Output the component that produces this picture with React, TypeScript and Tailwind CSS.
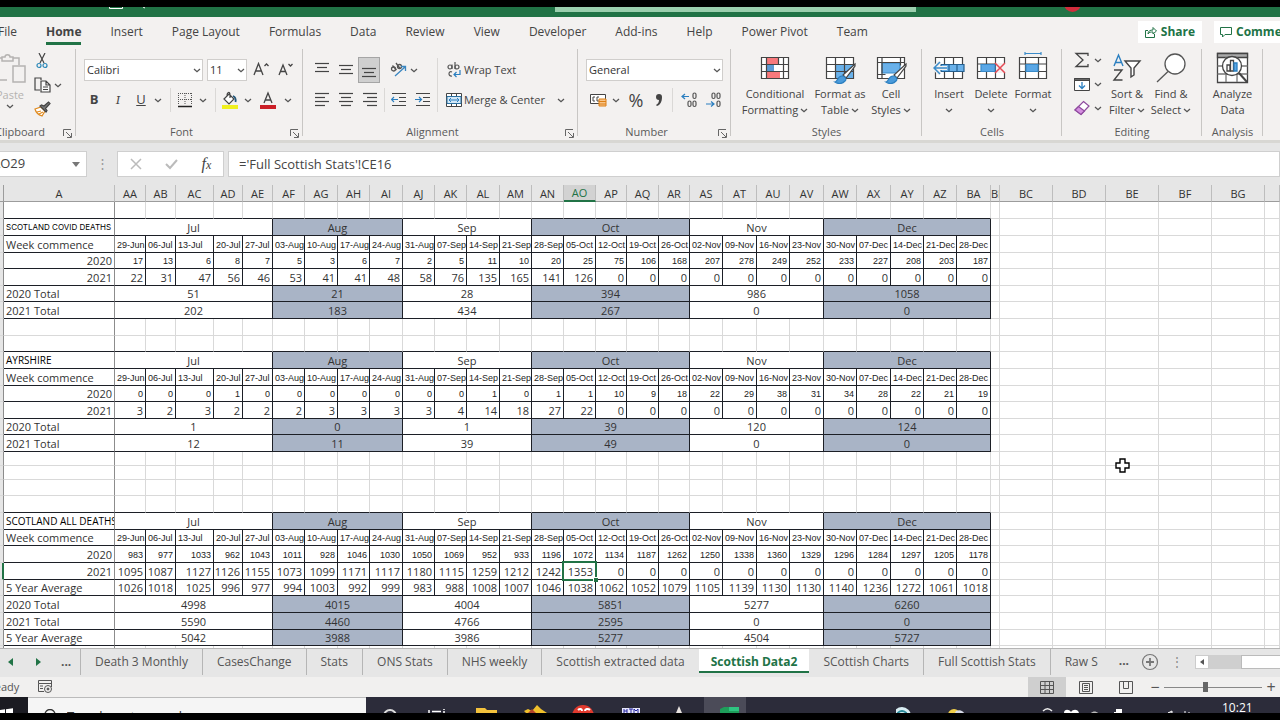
import type { ReactNode } from "react";

const months = [
  { name: "Jul", span: 5, shaded: false },
  { name: "Aug", span: 4, shaded: true },
  { name: "Sep", span: 4, shaded: false },
  { name: "Oct", span: 5, shaded: true },
  { name: "Nov", span: 4, shaded: false },
  { name: "Dec", span: 5, shaded: true },
];

const columns = [
  { name: "A", w: "w-[111px]" },
  { name: "AA", w: "w-[31px]" },
  { name: "AB", w: "w-[30px]" },
  { name: "AC", w: "w-[38px]" },
  { name: "AD", w: "w-[29px]" },
  { name: "AE", w: "w-[30px]" },
  { name: "AF", w: "w-[32px]" },
  { name: "AG", w: "w-[33px]" },
  { name: "AH", w: "w-[32px]" },
  { name: "AI", w: "w-[33px]" },
  { name: "AJ", w: "w-[32px]" },
  { name: "AK", w: "w-[32px]" },
  { name: "AL", w: "w-[33px]" },
  { name: "AM", w: "w-[32px]" },
  { name: "AN", w: "w-[32px]" },
  { name: "AO", w: "w-[32px]" },
  { name: "AP", w: "w-[31px]" },
  { name: "AQ", w: "w-[32px]" },
  { name: "AR", w: "w-[31px]" },
  { name: "AS", w: "w-[33px]" },
  { name: "AT", w: "w-[34px]" },
  { name: "AU", w: "w-[33px]" },
  { name: "AV", w: "w-[34px]" },
  { name: "AW", w: "w-[33px]" },
  { name: "AX", w: "w-[34px]" },
  { name: "AY", w: "w-[33px]" },
  { name: "AZ", w: "w-[33px]" },
  { name: "BA", w: "w-[34px]" },
  { name: "BB", w: "w-[9px]" },
  { name: "BC", w: "w-[53px]" },
  { name: "BD", w: "w-[53px]" },
  { name: "BE", w: "w-[53px]" },
  { name: "BF", w: "w-[53px]" },
  { name: "BG", w: "w-[53px]" },
  { name: "", w: "" },
];

const weeks =
  "29-Jun 06-Jul 13-Jul 20-Jul 27-Jul 03-Aug 10-Aug 17-Aug 24-Aug 31-Aug 07-Sep 14-Sep 21-Sep 28-Sep 05-Oct 12-Oct 19-Oct 26-Oct 02-Nov 09-Nov 16-Nov 23-Nov 30-Nov 07-Dec 14-Dec 21-Dec 28-Dec".split(" ");

type Kind = "blank" | "lead" | "months" | "weeks" | "small" | "values" | "totals";
type Row = { h: string; kind: Kind; label?: string; data?: string; tiny?: boolean };

const H17 = "h-[17px]";
const H16 = "h-[16px]";
const H14 = "h-[14px]";

const rows: Row[] = [
  { h: H17, kind: "lead" },
  { h: H17, kind: "months", label: "SCOTLAND COVID DEATHS", tiny: true },
  { h: H17, kind: "weeks", label: "Week commence" },
  { h: H16, kind: "small", label: "2020", data: "17 13 6 8 7 5 3 6 7 2 5 11 10 20 25 75 106 168 207 278 249 252 233 227 208 203 187" },
  { h: H17, kind: "values", label: "2021", data: "22 31 47 56 46 53 41 41 48 58 76 135 165 141 126 0 0 0 0 0 0 0 0 0 0 0 0" },
  { h: H16, kind: "totals", label: "2020 Total", data: "51 21 28 394 986 1058" },
  { h: H17, kind: "totals", label: "2021 Total", data: "202 183 434 267 0 0" },
  { h: H17, kind: "blank" },
  { h: H16, kind: "lead" },
  { h: H17, kind: "months", label: "AYRSHIRE" },
  { h: H17, kind: "weeks", label: "Week commence" },
  { h: H16, kind: "small", label: "2020", data: "0 0 0 1 0 0 0 0 0 0 0 1 0 1 1 10 9 18 22 29 38 31 34 28 22 21 19" },
  { h: H17, kind: "values", label: "2021", data: "3 2 3 2 2 2 3 3 3 3 4 14 18 27 22 0 0 0 0 0 0 0 0 0 0 0 0" },
  { h: H16, kind: "totals", label: "2020 Total", data: "1 0 1 39 120 124" },
  { h: H17, kind: "totals", label: "2021 Total", data: "12 11 39 49 0 0" },
  { h: H14, kind: "blank" },
  { h: H14, kind: "blank" },
  { h: H16, kind: "blank" },
  { h: H17, kind: "lead" },
  { h: H17, kind: "months", label: "SCOTLAND ALL DEATHS" },
  { h: H16, kind: "weeks", label: "Week commence" },
  { h: H17, kind: "small", label: "2020", data: "983 977 1033 962 1043 1011 928 1046 1030 1050 1069 952 933 1196 1072 1134 1187 1262 1250 1338 1360 1329 1296 1284 1297 1205 1178" },
  { h: H17, kind: "values", label: "2021", data: "1095 1087 1127 1126 1155 1073 1099 1171 1117 1180 1115 1259 1212 1242 1353 0 0 0 0 0 0 0 0 0 0 0 0" },
  { h: H16, kind: "values", label: "5 Year Average", data: "1026 1018 1025 996 977 994 1003 992 999 983 988 1008 1007 1046 1038 1062 1052 1079 1105 1139 1130 1130 1140 1236 1272 1061 1018" },
  { h: H17, kind: "totals", label: "2020 Total", data: "4998 4015 4004 5851 5277 6260" },
  { h: H17, kind: "totals", label: "2021 Total", data: "5590 4460 4766 2595 0 0" },
  { h: H16, kind: "totals", label: "5 Year Average", data: "5042 3988 3986 5277 4504 5727" },
  { h: H17, kind: "blank" },
];

const SELECTED_ROW = 22;
const SELECTED_COL = 14;

/* ---------- icons ---------- */

function Chev() {
  return (
    <svg width="8" height="5" viewBox="0 0 8 5" fill="none" stroke="#555" strokeWidth="1.3" className="shrink-0">
      <path d="M1 1l3 2.7L7 1" />
    </svg>
  );
}

function Lines({ rows: r }: { rows: [number, number, number][] }) {
  return (
    <svg width="16" height="16" viewBox="0 0 16 16" stroke="#444" strokeWidth="1.2">
      {r.map(([x1, x2, y], i) => (
        <path key={i} d={`M${x1} ${y}H${x2}`} />
      ))}
    </svg>
  );
}

function Launcher() {
  return (
    <svg width="9" height="9" viewBox="0 0 9 9" fill="none" stroke="#666">
      <path d="M.5 7V.5H8M3 3l5 5M8.500 4v4.500H4" />
    </svg>
  );
}

function PasteIcon() {
  return (
    <svg width="34" height="32" viewBox="0 0 34 32" fill="none" stroke="#b5b3b1" strokeWidth="1.5">
      <path d="M14 27H3V5h6m11 0h6v7" />
      <path d="M9 8V4h3c0-3 5-3 5 0h3v4z" />
      <path d="M20 13h12v16H20z" fill="#f3f1f0" />
    </svg>
  );
}

function CutIcon() {
  return (
    <svg width="12" height="16" viewBox="0 0 12 16" fill="none" stroke="#444" strokeWidth="1.2">
      <path d="M3 0l5 10M9 0L4 10" />
      <circle cx="3" cy="12.500" r="2" stroke="#2b88b8" />
      <circle cx="9" cy="12.500" r="2" stroke="#2b88b8" />
    </svg>
  );
}

function CopyIcon() {
  return (
    <svg width="17" height="16" viewBox="0 0 17 16" fill="none" stroke="#444" strokeWidth="1.2">
      <path d="M6 13H1V1h6v2" />
      <path d="M7 4h5l4 4v7H7zM12 4v4h4M9 10h5M9 12.500h5" fill="#f9f9f9" />
    </svg>
  );
}

function BrushIcon() {
  return (
    <svg width="17" height="16" viewBox="0 0 17 16" fill="none" strokeWidth="1.200">
      <path d="M1 8l6-2 4 4-3 5C5 14 2 12 1 8z" fill="#fff" stroke="#e08a1e" />
      <path d="M3 11l4-1M5 13l4-2" stroke="#e08a1e" />
      <path d="M6 5l6 6 1-1.500-1.500-2L16 2.500 14.500 1 10 5 7.500 4z" fill="#777" stroke="#444" />
    </svg>
  );
}

function GrowFont({ up }: { up: boolean }) {
  return (
    <svg width="16" height="16" viewBox="0 0 16 16" fill="none" stroke="#444" strokeWidth="1.3">
      {up ? <path d="M1 13L5.500 1.500 10 13M3 9h5.500M11.500 4l2-2 2 2" /> : <path d="M2 13l4-10 4 10M3.500 9.500h5M11.500 2l2 2 2-2" />}
    </svg>
  );
}

function BordersIcon() {
  return (
    <svg width="16" height="16" viewBox="0 0 16 16" fill="none" stroke="#555">
      <path d="M1.500 1v12M14.500 1v12M8 1v12M1 1.500h14M1 7.500h14" strokeDasharray="1 1" />
      <path d="M1 14.500h14" stroke="#222" strokeWidth="1.500" />
    </svg>
  );
}

function FillIcon() {
  return (
    <svg width="18" height="18" viewBox="0 0 18 18" fill="none">
      <path d="M3 8l5-5 5 5-5 5zM6 5c0-4 3-5 3-1v3" stroke="#444" strokeWidth="1.200" fill="#fff" />
      <path d="M12 5c3 1 3 3 2.500 6" stroke="#24587b" strokeWidth="1.800" />
      <path d="M1 14h16v4H1z" fill="#f0f01e" />
    </svg>
  );
}

function FontColorIcon() {
  return (
    <svg width="18" height="18" viewBox="0 0 18 18" fill="none">
      <path d="M5 12L9 2l4 10M6.500 9h5" stroke="#444" strokeWidth="1.300" />
      <path d="M1 14h16v4H1z" fill="#cb1f27" />
    </svg>
  );
}

function OrientationIcon() {
  return (
    <svg width="17" height="16" viewBox="0 0 17 16" fill="none" strokeWidth="1.300">
      <g stroke="#555">
        <circle cx="3.500" cy="7" r="2" />
        <path d="M2.500 3.500L6.500 8M6 1l4 5.500" />
        <circle cx="9.500" cy="4.500" r="2" />
      </g>
      <path d="M5 14l10-9M11 4.500h4.500V9" stroke="#3a86c0" />
    </svg>
  );
}

function IndentIcon({ right }: { right: boolean }) {
  return (
    <svg width="16" height="16" viewBox="0 0 16 16" fill="none" strokeWidth="1.200">
      <path d="M1 1.500h14M8 5.500h7M8 9.500h7M1 13.500h14" stroke="#444" />
      {right ? <path d="M0 7.500h6M4 5l2.500 2.500L4 10" stroke="#2b7fc0" /> : <path d="M7 7.500H1M3 5L.5 7.500 3 10" stroke="#2b7fc0" />}
    </svg>
  );
}

function WrapIcon() {
  return (
    <svg width="16" height="16" viewBox="0 0 16 16" fill="none" stroke="#555" strokeWidth="1.200">
      <circle cx="4" cy="5" r="2" />
      <path d="M6 2.500V7M9 0v7M6 10c-4-2-4 5 0 4" />
      <circle cx="11" cy="5" r="2" />
      <path d="M14 8v4.500H8M10.500 10L8 12.500l2.500 2.500" stroke="#2b7fc0" />
    </svg>
  );
}

function MergeIcon() {
  return (
    <svg width="16" height="16" viewBox="0 0 16 16" fill="none" stroke="#444">
      <path d="M.5 1.500h15v13H.5zM5.500 1.500v3M10.500 1.500v3M5.500 12v2.500M10.500 12v2.500" fill="#fff" />
      <path d="M1 4.500h14v7H1z" fill="#d3e8f7" stroke="#2b6f9f" />
      <path d="M3 8h10M5 6L3 8l2 2M11 6l2 2-2 2" stroke="#2b7fc0" />
    </svg>
  );
}

function MoneyIcon() {
  return (
    <svg width="17" height="14" viewBox="0 0 17 14" fill="none" stroke="#444">
      <path d="M.5 1.500h15v9H.5z" fill="#fff" />
      <path d="M5 4H3v4h2M9 4H7v4h2" />
      <path d="M9 6h7v7H9z" fill="#f7c58b" stroke="#dd7f14" />
      <path d="M9 8.500h7M9 11h7" stroke="#dd7f14" />
    </svg>
  );
}

function DecimalIcon({ increase }: { increase: boolean }) {
  return (
    <svg width="17" height="16" viewBox="0 0 17 16" fill="none" strokeWidth="1.200">
      {increase ? (
        <>
          <path d="M8 4.500H1M4 2L1 4.500 4 7" stroke="#2b7fc0" />
          <g stroke="#555">
            <rect x="12" y="1" width="3" height="5.500" rx="1.500" />
            <rect x="7" y="9" width="3" height="5.500" rx="1.500" />
            <rect x="12" y="9" width="3" height="5.500" rx="1.500" />
          </g>
        </>
      ) : (
        <>
          <g stroke="#555">
            <rect x="7" y="1" width="3" height="5.500" rx="1.500" />
            <rect x="12" y="1" width="3" height="5.500" rx="1.500" />
            <rect x="12" y="9" width="3" height="5.500" rx="1.500" />
          </g>
          <path d="M1 12h8M6 9.500L9 12l-3 2.500" stroke="#2b7fc0" />
        </>
      )}
    </svg>
  );
}

function GridBase({ children }: { children?: ReactNode }) {
  return (
    <svg width="32" height="32" viewBox="0 0 32 32" fill="none" stroke="#444" strokeWidth="1.200">
      <path d="M2.500 5.500h27v21h-27z" fill="#fff" />
      {children}
    </svg>
  );
}

function ConditionalIcon() {
  return (
    <GridBase>
      <path d="M7 6h12v6H7zM7 19h14v7H7z" fill="#f8797c" stroke="none" />
      <path d="M7 12h8v7H7z" fill="#5b9bd5" stroke="none" />
      <path d="M2.500 12.500h27M2.500 19.500h27M7.500 5.500v21M24.500 5.500v21M19.500 5.500v7" />
    </GridBase>
  );
}

function Paint() {
  return (
    <>
      <path d="M31 12L19 23l3 3 9-12z" fill="#fff" />
      <path d="M11 30c3 0 2-6 7-6 3 0 5 3 3 5-3 3-7 3-10 1z" fill="#4a9bdb" stroke="#2b7fc0" />
    </>
  );
}

function FormatTableIcon() {
  return (
    <GridBase>
      <path d="M12 12h17v14H12z" fill="#69b1ea" stroke="none" />
      <path d="M2.500 12.500h27M2.500 19.500h27M11.500 5.500v21M20.500 5.500v21" />
      <Paint />
    </GridBase>
  );
}

function CellStylesIcon() {
  return (
    <GridBase>
      <path d="M7 11h18v10H7z" fill="#69b1ea" stroke="#3a8bc9" />
      <path d="M2.500 10.500h27M7 5.500v21M25.500 5.500v8M2.500 22.500h8" />
      <Paint />
    </GridBase>
  );
}

function InsertIcon() {
  return (
    <GridBase>
      <path d="M11.500 5.500v21M20.500 5.500v21" />
      <path d="M8 12.500h23v7H8zM16 12.500v7M24 12.500v7" fill="#69b1ea" stroke="#245f8f" />
      <path d="M14 16H1M7 10l-6 6 6 6" stroke="#f3f1f0" strokeWidth="4" />
      <path d="M14 16H1M7 10l-6 6 6 6" stroke="#3a8bc9" strokeWidth="1.500" />
    </GridBase>
  );
}

function DeleteIcon() {
  return (
    <GridBase>
      <path d="M2.500 12h27M2.500 19.500h27M11.500 5.500v21M20.500 5.500v21" />
      <path d="M6 12.500h14v7H6z" fill="#5aa7e6" stroke="#3a8bc9" />
      <path d="M21 11h11v10H21z" fill="#f3f1f0" stroke="none" />
      <path d="M20 11l10 10M30 11L20 21" stroke="#e64a55" strokeWidth="1.500" />
    </GridBase>
  );
}

function FormatIcon() {
  return (
    <GridBase>
      <path d="M2.500 12h27M2.500 19.500h27M8.500 5.500v21M21.500 5.500v21" />
      <path d="M9 12.500h12v7H9z" fill="#5aa7e6" stroke="#3a8bc9" />
      <path d="M8 1.500h16M8 0v3M24 0v3" stroke="#3a8bc9" />
    </GridBase>
  );
}

function SortIcon() {
  return (
    <svg width="30" height="32" viewBox="0 0 30 32" fill="none" strokeWidth="1.400">
      <path d="M2 14L6.500 3 11 14M3.500 10.500h6" stroke="#2b7fc0" />
      <path d="M2 18h8L2 28h8.500" stroke="#444" />
      <path d="M13 9h15l-6 7v7l-3 2v-9z" stroke="#444" fill="#fff" />
    </svg>
  );
}

function FindIcon() {
  return (
    <svg width="32" height="32" viewBox="0 0 32 32" fill="none" stroke="#555" strokeWidth="1.300">
      <circle cx="20" cy="12" r="10" fill="#fff" />
      <path d="M13 19.500L2 30" />
    </svg>
  );
}

function AnalyzeIcon() {
  return (
    <svg width="33" height="32" viewBox="0 0 33 32" fill="none" stroke="#444" strokeWidth="1.300">
      <path d="M1.500 1.500h30v29h-30z" fill="#fff" />
      <path d="M1.500 1.500h30v4h-30z" fill="#aaa" />
      <path d="M1.500 14h30M1.500 22h30M10 5v25M21 5v25" stroke="#777" />
      <circle cx="16" cy="14" r="9.500" fill="#fff" />
      <path d="M11 13h3v6h-3z" />
      <path d="M14.500 8.500h3V19h-3z" />
      <path d="M18 11h3v8h-3z" fill="#5aa7e6" stroke="#2b7fc0" />
      <path d="M23 21l8 9" strokeWidth="2" />
    </svg>
  );
}

function SigmaIcon() {
  return (
    <svg width="16" height="16" viewBox="0 0 16 16" fill="none" stroke="#444" strokeWidth="1.300">
      <path d="M14 4V1.500H2L9 8l-7 6.500h12V12" />
    </svg>
  );
}

function FillDownIcon() {
  return (
    <svg width="16" height="15" viewBox="0 0 16 15" fill="none" stroke="#444">
      <path d="M.5 1.500h15v12H.5z" fill="#fff" />
      <path d="M.5 1.500h15v2H.5z" fill="#666" />
      <path d="M8 5v6.500M5 8.500l3 3 3-3" stroke="#2b7fc0" strokeWidth="1.300" />
    </svg>
  );
}

function EraserIcon() {
  return (
    <svg width="16" height="16" viewBox="0 0 16 16" fill="none" stroke="#8e4a9e" strokeWidth="1.200">
      <path d="M9.500 1.500L15 6l-8 8.500L1 10z" fill="#fff" />
      <path d="M4.500 6.500l6 4.500L7 14.500 1 10z" fill="#d58fe0" />
    </svg>
  );
}

/* ---------- ribbon parts ---------- */

function Tool({ label, children, w = "w-6" }: { label: string; children: ReactNode; w?: string }) {
  return (
    <button type="button" aria-label={label} className={`flex h-6 shrink-0 items-center justify-center ${w}`}>
      {children}
    </button>
  );
}

function Divider() {
  return <span className="mr-0.5 ml-1.5 h-6 w-px shrink-0 bg-[#dad8d6]" />;
}

function Group({ name, width, launcher, children }: { name: string; width: string; launcher?: boolean; children: ReactNode }) {
  return (
    <section className={`relative flex h-[93px] shrink-0 flex-col justify-between ${width}`}>
      <div className="flex">{children}</div>
      <div className={`flex h-4 items-center justify-center text-[11px] text-[#5a5a5a] ${launcher ? "pr-4" : ""}`}>
        {name}
        {launcher && (
          <button type="button" aria-label={`${name} settings`} className="absolute right-1 bottom-0.5">
            <Launcher />
          </button>
        )}
      </div>
      <span className="absolute top-0.5 right-0 bottom-1 w-px bg-[#c8c6c4]" />
    </section>
  );
}

function BigTool({ icon, lines, width, chev = true }: { icon: ReactNode; lines: string[]; width: string; chev?: boolean }) {
  return (
    <button type="button" className={`flex shrink-0 flex-col items-center pt-1 text-[11px] leading-4 whitespace-nowrap ${width}`}>
      <span className="mb-0.5 flex h-[33px] items-center">{icon}</span>
      <span>{lines[0]}</span>
      <span className="flex h-4 items-center gap-0.5">
        {lines[1]}
        {chev && <Chev />}
      </span>
    </button>
  );
}

function Picker({ label, value, width }: { label: string; value: string; width: string }) {
  return (
    <div className={`relative h-[22px] shrink-0 ${width}`}>
      <select aria-label={label} className="block h-full w-full appearance-none border border-[#d0cecc] bg-white pl-0.5 text-[11px] text-[#333]">
        <option>{value}</option>
      </select>
      <span className="pointer-events-none absolute inset-y-0 right-0.5 flex items-center">
        <Chev />
      </span>
    </div>
  );
}

function Ribbon() {
  return (
    <div className="flex h-[93px] shrink-0 overflow-hidden bg-[#f3f1f0] text-[#444]">
      <Group name="Clipboard" width="-ml-5 w-24" launcher>
        <button type="button" className="ml-2.5 flex w-10 shrink-0 flex-col items-center pt-1.5 text-[11px] text-[#b5b3b1]">
          <PasteIcon />
          <span className="mt-0.5">Paste</span>
          <Chev />
        </button>
        <div className="flex flex-col pt-0.5">
          <Tool label="Cut"><CutIcon /></Tool>
          <div className="flex">
            <Tool label="Copy"><CopyIcon /></Tool>
            <Tool label="Copy options" w="w-2"><Chev /></Tool>
          </div>
          <Tool label="Format Painter"><BrushIcon /></Tool>
        </div>
      </Group>

      <Group name="Font" width="w-[227px]" launcher>
        <div className="flex flex-col gap-1.5 pt-[11px] pl-1.5">
          <div className="flex items-center pl-0.5">
            <Picker label="Font" value="Calibri" width="w-[119px]" />
            <span className="w-1" />
            <Picker label="Font size" value="11" width="w-10" />
            <span className="w-0.5" />
            <Tool label="Increase font size"><GrowFont up /></Tool>
            <Tool label="Decrease font size"><GrowFont up={false} /></Tool>
          </div>
          <div className="flex items-center text-[13px]">
            <Tool label="Bold"><b>B</b></Tool>
            <Tool label="Italic"><i className="font-serif">I</i></Tool>
            <Tool label="Underline" w="w-[22px]"><u>U</u></Tool>
            <Tool label="Underline options" w="w-3"><Chev /></Tool>
            <Divider />
            <Tool label="Borders"><BordersIcon /></Tool>
            <Tool label="Border options" w="w-3"><Chev /></Tool>
            <Divider />
            <Tool label="Fill color"><FillIcon /></Tool>
            <Tool label="Fill options" w="w-3"><Chev /></Tool>
            <Tool label="Font color" w="w-7"><FontColorIcon /></Tool>
            <Tool label="Font color options" w="w-3"><Chev /></Tool>
          </div>
        </div>
      </Group>

      <Group name="Alignment" width="w-[275px]" launcher>
        <div className="mt-[11px] ml-[7px] flex w-32 flex-col gap-1.5 border-r border-[#dad8d6]">
          <div className="flex h-6 items-center">
            <Tool label="Top align"><Lines rows={[[1, 15, 1.5], [3, 13, 5.5], [1, 15, 9.5]]} /></Tool>
            <Tool label="Middle align"><Lines rows={[[1, 15, 3.5], [3, 13, 7.5], [1, 15, 11.5]]} /></Tool>
            <span className="-my-px border border-[#a5a5a5] bg-[#cfcfcf]">
              <Tool label="Bottom align" w="w-5"><Lines rows={[[1, 15, 6.5], [3, 13, 10.5], [1, 15, 14.5]]} /></Tool>
            </span>
            <span className="w-2" />
            <Tool label="Orientation" w="w-5"><OrientationIcon /></Tool>
            <Tool label="Orientation options" w="w-3"><Chev /></Tool>
          </div>
          <div className="flex items-center">
            <Tool label="Align left"><Lines rows={[[1, 15, 1.5], [1, 11, 5.5], [1, 15, 9.5], [1, 11, 13.5]]} /></Tool>
            <Tool label="Center"><Lines rows={[[1, 15, 1.5], [3, 13, 5.5], [1, 15, 9.5], [3, 13, 13.5]]} /></Tool>
            <Tool label="Align right"><Lines rows={[[1, 15, 1.5], [5, 15, 5.5], [1, 15, 9.5], [5, 15, 13.5]]} /></Tool>
            <span className="mx-0.5 h-6 w-px bg-[#dad8d6]" />
            <Tool label="Decrease indent"><IndentIcon right={false} /></Tool>
            <Tool label="Increase indent"><IndentIcon right /></Tool>
          </div>
        </div>
        <div className="flex flex-col gap-1.5 pt-[11px] pl-2 text-[11px]">
          <button type="button" className="flex h-6 items-center gap-0.5 whitespace-nowrap">
            <WrapIcon />
            Wrap Text
          </button>
          <button type="button" className="flex h-6 items-center gap-0.5 whitespace-nowrap">
            <MergeIcon />
            Merge &amp; Center
            <span className="w-2" />
            <Chev />
          </button>
        </div>
      </Group>

      <Group name="Number" width="w-[153px]" launcher>
        <div className="flex flex-col gap-1.5 pt-[11px] pl-2">
          <div className="flex h-6 items-center">
            <Picker label="Number format" value="General" width="w-[137px]" />
          </div>
          <div className="flex items-center">
            <Tool label="Accounting format"><MoneyIcon /></Tool>
            <Tool label="Accounting options" w="w-3"><Chev /></Tool>
            <span className="w-0.5" />
            <Tool label="Percent"><span className="text-lg">%</span></Tool>
            <Tool label="Comma style" w="w-[22px]">
              <svg width="10" height="16" viewBox="0 0 10 16" fill="#444"><path d="M2 5a3 3 0 116 0c0 5-2 8-5 9l-1-1c2-1 3-3 3-5-2 0-3-1-3-3z" /></svg>
            </Tool>
            <span className="mr-1 ml-0.5 h-6 w-px bg-[#dad8d6]" />
            <Tool label="Increase decimal"><DecimalIcon increase /></Tool>
            <Tool label="Decrease decimal"><DecimalIcon increase={false} /></Tool>
          </div>
        </div>
      </Group>

      <Group name="Styles" width="w-[191px] px-2">
        <BigTool icon={<ConditionalIcon />} lines={["Conditional", "Formatting"]} width="w-[72px]" />
        <BigTool icon={<FormatTableIcon />} lines={["Format as", "Table"]} width="w-[58px]" />
        <BigTool icon={<CellStylesIcon />} lines={["Cell", "Styles"]} width="w-11" />
      </Group>

      <Group name="Cells" width="w-[140px] px-1.5">
        <BigTool icon={<InsertIcon />} lines={["Insert", ""]} width="w-[42px]" />
        <BigTool icon={<DeleteIcon />} lines={["Delete", ""]} width="w-[42px]" />
        <BigTool icon={<FormatIcon />} lines={["Format", ""]} width="w-[42px]" />
      </Group>

      <Group name="Editing" width="w-[140px]">
        <div className="flex w-11 flex-col pt-px pl-2">
          {[
            { label: "AutoSum", icon: <SigmaIcon /> },
            { label: "Fill", icon: <FillDownIcon /> },
            { label: "Clear", icon: <EraserIcon /> },
          ].map((t) => (
            <div key={t.label} className="flex">
              <Tool label={t.label}>{t.icon}</Tool>
              <Tool label={`${t.label} options`} w="w-2"><Chev /></Tool>
            </div>
          ))}
        </div>
        <BigTool icon={<SortIcon />} lines={["Sort &", "Filter"]} width="w-[42px]" />
        <BigTool icon={<FindIcon />} lines={["Find &", "Select"]} width="w-[46px]" />
      </Group>

      <Group name="Analysis" width="w-[61px]">
        <BigTool icon={<AnalyzeIcon />} lines={["Analyze", "Data"]} width="w-full" chev={false} />
      </Group>
    </div>
  );
}

const tabs = ["File", "Home", "Insert", "Page Layout", "Formulas", "Data", "Review", "View", "Developer", "Add-ins", "Help", "Power Pivot", "Team"];

function Tabs() {
  return (
    <div className="flex h-[30px] shrink-0 items-center overflow-hidden bg-[#f3f1f0] text-xs text-[#444]">
      <nav className="-ml-0.5 flex flex-1 gap-[29px]">
        {tabs.map((t) =>
          t === "Home" ? (
            <button key={t} type="button" className="border-b-3 border-[#217346] pt-[3px] leading-5 font-bold">{t}</button>
          ) : (
            <button key={t} type="button" className="border-b-3 border-transparent pt-[3px] leading-5 whitespace-nowrap">{t}</button>
          )
        )}
      </nav>
      <button type="button" className="mr-3 flex h-[22px] w-16 shrink-0 items-center justify-center gap-1 bg-white font-bold text-[#217346]">
        <svg width="12" height="12" viewBox="0 0 12 12" fill="none" stroke="#217346">
          <path d="M3 4.500H.5v7h9V8M3 8c0-3 2-4 5-4V1.500L11.500 5 8 8V6C6 6 4 6 3 8z" />
        </svg>
        Share
      </button>
      <button type="button" className="-mr-8 flex h-[22px] w-[98px] shrink-0 items-center gap-1 bg-white pl-1.5 font-bold text-[#217346]">
        <svg width="12" height="12" viewBox="0 0 12 12" fill="none" stroke="#217346">
          <path d="M.5 1.500h11v7H5L2.500 11V8.500h-2z" />
        </svg>
        Comments
      </button>
    </div>
  );
}

function FormulaBar() {
  return (
    <div className="flex h-[45px] shrink-0 items-center border-t-3 border-[#d8d7d3] bg-[#e6e6e6] text-[13px] text-[#444]">
      <div className="relative flex h-[26px] w-[87px] shrink-0 items-center overflow-hidden border border-l-0 border-[#cfcfcf] bg-white">
        <input aria-label="Name box" defaultValue="AO29" className="-ml-2 w-20 outline-none" />
        <span className="absolute right-1.5 border-x-4 border-t-5 border-x-transparent border-t-[#777]" />
      </div>
      <span className="w-[30px] text-center text-[#999]">⋮</span>
      <div className="mr-1 flex h-[26px] w-[107px] shrink-0 items-center justify-around border border-[#cfcfcf] bg-white">
        <button type="button" aria-label="Cancel">
          <svg width="12" height="12" viewBox="0 0 12 12" stroke="#bbb" strokeWidth="1.500"><path d="M1 1l10 10M11 1L1 11" /></svg>
        </button>
        <button type="button" aria-label="Enter">
          <svg width="13" height="12" viewBox="0 0 13 12" fill="none" stroke="#bbb" strokeWidth="2"><path d="M1 6l4 4 7-8" /></svg>
        </button>
        <button type="button" className="font-[Liberation_Serif,serif] text-base italic">
          f<span className="text-xs">x</span>
        </button>
      </div>
      <input aria-label="Formula" defaultValue="='Full Scottish Stats'!CE16" className="h-[26px] min-w-0 flex-1 border border-[#cfcfcf] bg-white pl-2.5 outline-none" />
    </div>
  );
}

/* ---------- sheet ---------- */

const INK = "border-[#1c1f26]";
const GRID = "border-[#d9d9d9]";
const SHADE = "bg-[#a9b4c6]";
const CELL = "border-r border-b p-0 overflow-hidden whitespace-nowrap";
const SMALL = "font-[Liberation_Sans,sans-serif] text-[9px] align-bottom text-[#222]";

function SheetRow({ row, index }: { row: Row; index: number }) {
  const { kind, label } = row;
  const values = row.data ? row.data.split(" ") : [];
  const empty = kind === "blank" || kind === "lead";
  const numberLabel = kind === "small" || label === "2021";

  return (
    <tr className={row.h}>
      <th className={`border-r border-b bg-[#e6e6e6] p-0 ${GRID} ${index === SELECTED_ROW ? "border-r-2 border-r-[#217346]" : "border-r-[#8c8c8c]"}`} />
      <td
        className={`${CELL} border-r-[#8c8c8c] px-0.5 ${kind === "blank" ? "border-b-[#d9d9d9]" : "border-b-[#1c1f26]"} ${numberLabel ? "text-right" : "text-left"} ${
          row.tiny ? "font-[Inter,sans-serif] text-[8px] text-black" : kind === "months" ? "text-[10px] text-black" : ""
        }`}
      >
        {label}
      </td>
      {empty &&
        weeks.map((w) => <td key={w} className={`${CELL} border-r-[#d9d9d9] ${kind === "lead" ? "border-b-[#1c1f26]" : "border-b-[#d9d9d9]"}`} />)}
      {(kind === "months" || kind === "totals") &&
        months.map((m, i) => (
          <td key={m.name} colSpan={m.span} className={`${CELL} ${INK} text-center ${m.shaded ? SHADE : ""}`}>
            {kind === "months" ? m.name : values[i]}
          </td>
        ))}
      {kind === "weeks" &&
        weeks.map((w) => (
          <td key={w} className={`${CELL} ${INK} ${SMALL} pl-0.5 text-left`}>{w}</td>
        ))}
      {kind === "small" &&
        values.map((v, i) => (
          <td key={i} className={`${CELL} ${INK} ${SMALL} pr-0.5 text-right`}>{v}</td>
        ))}
      {kind === "values" &&
        values.map((v, i) =>
          index === SELECTED_ROW && i === SELECTED_COL ? (
            <td key={i} className={`relative border-r border-b p-0 pr-0.5 text-right ${INK}`}>
              {v}
              <span className="absolute -inset-x-0.5 -inset-y-0.5 border-2 border-[#217346]" />
              <span className="absolute -right-[3px] -bottom-[3px] size-[5px] border-t border-l border-white bg-[#217346]" />
            </td>
          ) : (
            <td key={i} className={`${CELL} ${INK} pr-0.5 text-right`}>{v}</td>
          )
        )}
      {columns.slice(28).map((c) => (
        <td key={c.name} className={`${CELL} ${GRID}`} />
      ))}
    </tr>
  );
}

function Sheet() {
  return (
    <main className="relative min-h-0 flex-1 overflow-hidden bg-white">
      <table className="w-full table-fixed border-separate border-spacing-0 text-[11px] leading-[13px] text-[#333]">
        <colgroup>
          <col className="w-1" />
          {columns.map((c) => (
            <col key={c.name} className={c.w} />
          ))}
        </colgroup>
        <thead>
          <tr className="h-[17px] bg-[#e6e6e6]">
            <th className="border-r border-b border-[#9c9c9c] p-0" />
            {columns.map((c) => (
              <th
                key={c.name}
                className={`overflow-hidden border-r p-0 text-center font-normal ${
                  c.name === "AO" ? "border-b-2 border-r-[#bdbdbd] border-b-[#217346] bg-[#d2d2d2] text-[#217346]" : "border-b border-r-[#bdbdbd] border-b-[#9c9c9c]"
                }`}
              >
                {c.name}
              </th>
            ))}
          </tr>
        </thead>
        <tbody>
          {rows.map((row, i) => (
            <SheetRow key={i} row={row} index={i} />
          ))}
        </tbody>
      </table>
      {/* mouse pointer */}
      <svg className="absolute top-[273px] left-[1115px]" width="15" height="15" viewBox="0 0 15 15" fill="#fff" stroke="#000" strokeWidth="1.400">
        <path d="M5 1h5v4h4v5h-4v4H5v-4H1V5h4z" />
      </svg>
    </main>
  );
}

const sheets = ["Death 3 Monthly", "CasesChange", "Stats", "ONS Stats", "NHS weekly", "Scottish extracted data", "Scottish Data2", "SCottish Charts", "Full Scottish Stats"];

function SheetTabs() {
  return (
    <div className="flex h-[29px] shrink-0 items-start overflow-hidden border-t border-[#b5b5b5] bg-[#e6e6e6] text-xs text-[#555]">
      <div className="flex h-[26px] w-[81px] shrink-0 items-center border-r border-[#b5b5b5]">
        <button type="button" aria-label="Previous sheet" className="ml-2 border-y-4 border-r-5 border-y-transparent border-r-[#217346]" />
        <button type="button" aria-label="Next sheet" className="ml-[23px] border-y-4 border-l-5 border-y-transparent border-l-[#217346]" />
        <span className="ml-5 font-bold">...</span>
      </div>
      {sheets.map((s) =>
        s === "Scottish Data2" ? (
          <button key={s} type="button" className="h-6 shrink-0 border-b-2 border-[#217346] bg-white px-3 pt-1 font-bold whitespace-nowrap text-[#217346]">{s}</button>
        ) : (
          <button key={s} type="button" className={`h-[26px] shrink-0 px-3.5 whitespace-nowrap ${s === "Scottish extracted data" ? "" : "border-r border-[#b5b5b5]"}`}>{s}</button>
        )
      )}
      <button type="button" className="h-[26px] shrink-0 pl-3.5 text-left whitespace-nowrap">Raw S</button>
      <span className="h-[26px] flex-1 pr-3 text-right leading-[24px] font-bold">...</span>
      <div className="flex h-[26px] w-[139px] shrink-0 items-center">
        <button type="button" aria-label="New sheet">
          <svg width="18" height="18" viewBox="0 0 18 18" fill="none" stroke="#777" strokeWidth="1.200">
            <circle cx="9" cy="9" r="7.500" />
            <path d="M9 5v8M5 9h8" strokeWidth="1.800" />
          </svg>
        </button>
        <span className="w-9 text-center text-[#888]">⋮</span>
        <button type="button" aria-label="Scroll left" className="flex size-3.5 shrink-0 items-center justify-center border border-[#ccc] bg-white">
          <span className="border-y-3 border-r-4 border-y-transparent border-r-[#555]" />
        </button>
        <span className="h-3.5 w-8 bg-[#cfcfcf]" />
        <span className="h-3.5 flex-1 border border-r-0 border-[#bbb] bg-white" />
      </div>
    </div>
  );
}

function StatusBar() {
  return (
    <footer className="flex h-5 shrink-0 items-center overflow-hidden bg-[#f1f0ef] text-[11px] text-[#555]">
      <span className="-ml-3 w-[50px]">Ready</span>
      <svg width="15" height="14" viewBox="0 0 15 14" fill="none" stroke="#555">
        <path d="M.5.500h13v3H.5zM.5 3.500v8H6M2 6h3M2 8.500h3M13.500 3v4" />
        <circle cx="10" cy="9" r="3.500" />
        <circle cx="10" cy="9" r="1" fill="#555" />
      </svg>
      <div className="ml-auto flex h-full items-center">
        <button type="button" aria-label="Normal view" className="flex h-full w-[38px] items-center justify-center bg-[#cfcfcf]">
          <svg width="14" height="13" viewBox="0 0 14 13" fill="none" stroke="#555"><path d="M.5.500h13v12H.5zM5 .5v12M9.500.500v12M.5 4.500h13M.5 8.500h13" /></svg>
        </button>
        <button type="button" aria-label="Page layout view" className="flex h-full w-10 items-center justify-center">
          <svg width="14" height="13" viewBox="0 0 14 13" fill="none" stroke="#555"><path d="M.5.500h13v12H.5zM3.500 2.500h7v8h-7zM5 4.500h4M5 6.500h4M5 8.500h4" /></svg>
        </button>
        <button type="button" aria-label="Page break view" className="flex h-full w-10 items-center justify-center">
          <svg width="14" height="13" viewBox="0 0 14 13" fill="none" stroke="#555"><path d="M.5.500h13v12H.5zM4.500.500v7M9.500.500v7M4.500 7.500h5" /></svg>
        </button>
        <button type="button" className="w-[18px] text-center text-base leading-4">−</button>
        <input
          type="range"
          aria-label="Zoom"
          defaultValue={42}
          className="h-px w-[98px] appearance-none bg-[#888] [&::-webkit-slider-thumb]:h-2.5 [&::-webkit-slider-thumb]:w-[5px] [&::-webkit-slider-thumb]:appearance-none [&::-webkit-slider-thumb]:bg-[#666]"
        />
        <button type="button" className="w-[18px] text-center text-base leading-4">+</button>
      </div>
    </footer>
  );
}

function Taskbar() {
  return (
    <div className="flex h-4 shrink-0 overflow-hidden bg-[#2c2c3a]">
      <div className="w-7 shrink-0 bg-[#1b1b22]">
        <svg width="28" height="16" viewBox="0 0 28 16" fill="#fff"><path d="M0 13l5-.7V16H0zM6 12.200l7-1V16H6z" /></svg>
      </div>
      <div className="flex h-9 w-[338px] shrink-0 items-center border-t border-[#bbb] bg-[#f5f5f5] pl-4 text-[13px] text-[#333]">
        <svg width="13" height="14" viewBox="0 0 13 14" fill="none" stroke="#333" strokeWidth="1.300"><circle cx="6" cy="5.500" r="5" /><path d="M3 10l-3 4" /></svg>
        <input aria-label="Search" placeholder="Type here to search" className="ml-2.5 h-5 bg-transparent outline-none placeholder:text-[#333]" />
      </div>
      <svg width="380" height="16" viewBox="0 0 380 16" fill="none" className="shrink-0">
        <circle cx="24" cy="19" r="6" stroke="#ddd" strokeWidth="2" />
        <path d="M63 13v3M66 14.500h9M78 12v1m0 1v2" stroke="#fff" strokeWidth="1.500" />
        <path d="M110 11h9l2 2h10v3h-21z" fill="#f3c23c" />
        <path d="M158 14l4-2 4 2 5-6 4 4 6 4h-21z" fill="#f0c02c" />
        <path d="M162 16l4-4 4 4z" fill="#b3442b" />
        <circle cx="217" cy="19" r="11" fill="#e03a2e" />
        <path d="M212 13c2-2 4-1 4 1m3 0c0-2 3-3 5-1" stroke="#fff" strokeWidth="2" />
        <path d="M256 11h18v5h-18z" fill="#e6e6fa" />
        <path d="M258 12v4m3-4v4m-3-2h3m2-2h4m-2 0v4m3 0v-4l2 2 2-2v4" stroke="#2525a0" />
        <path d="M313 9l3 7h-6z" fill="#e8e3df" />
        <path d="M338 0h46v16h-46z" fill="#4b4b58" />
        <path d="M358 10h15v6h-19v-4z" fill="#1e9e5a" />
        <path d="M363 10h10v4h-10z" fill="#2fc481" />
      </svg>
      <div className="flex-1" />
      <svg width="320" height="16" viewBox="0 0 320 16" fill="none" className="shrink-0">
        <circle cx="6" cy="19" r="9" fill="#d9eef3" />
        <circle cx="6" cy="19" r="5" stroke="#2b8a9a" strokeWidth="2" />
        <circle cx="58" cy="18" r="6" fill="#f0cf4a" />
        <path d="M60 14c4-2 7 0 8 2h-9z" fill="#d8dbe8" />
        <path d="M147 14c3-3 6-3 9 0" stroke="#eee" strokeWidth="1.500" />
        <path d="M168 16c0-4 5-4 7-1 2-3 7-3 8 1z" fill="#fff" />
        <path d="M195 16c2-2 5-2 7 0z" fill="#bbb" />
        <path d="M220 12h6v4h-8v-1h2z" fill="#fff" />
        <path d="M272 16l4-2v2zM289 14v2M293 15v1" stroke="#fff" />
      </svg>
      <time className="w-[64px] shrink-0 pl-1.5 text-xs leading-[22px] text-white">10:21</time>
    </div>
  );
}

export default function App() {
  return (
    <div className="flex h-screen flex-col overflow-hidden bg-black font-['Open_Sans','Noto_Sans',sans-serif]">
      <div className="h-[7px] shrink-0" />
      <header className="flex h-2.5 shrink-0 items-start overflow-hidden bg-[#217346]">
        <svg width="160" height="4" viewBox="0 0 160 4" fill="none" className="shrink-0">
          <path d="M109.500 0v1.500h13V0" stroke="#fff" />
          <path d="M143 0l2 1" stroke="#fff" />
        </svg>
        <span className="ml-[395px] h-[5px] w-[361px] shrink-0 bg-[#9bcfae]" />
        <span className="-mt-3 ml-[148px] size-[17px] shrink-0 rounded-full bg-[#d22c3c]" />
      </header>
      <Tabs />
      <Ribbon />
      <FormulaBar />
      <Sheet />
      <SheetTabs />
      <StatusBar />
      <Taskbar />
      <div className="h-[7px] shrink-0" />
    </div>
  );
}
